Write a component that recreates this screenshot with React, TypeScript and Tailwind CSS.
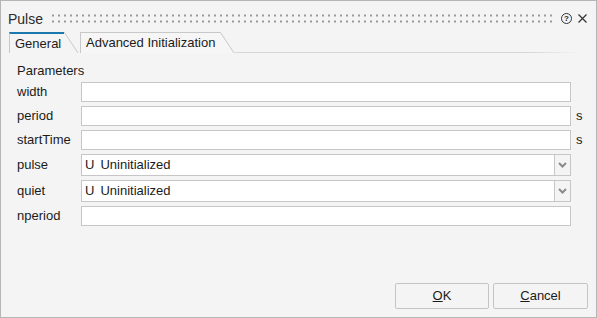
const rows = [
	{ label: "width", kind: "input" },
	{ label: "period", kind: "input", unit: "s" },
	{ label: "startTime", kind: "input", unit: "s" },
	{ label: "pulse", kind: "select", value: "Uninitialized" },
	{ label: "quiet", kind: "select", value: "Uninitialized" },
	{ label: "nperiod", kind: "input" },
];

const Grip = () => (
	<svg className="flex-1 h-[9px] mx-[9px]" preserveAspectRatio="none">
		<defs>
			<pattern id="grip" width="6" height="6" patternUnits="userSpaceOnUse">
				<rect x="0" y="0.5" width="2" height="2" fill="#9a9a9a" />
			</pattern>
		</defs>
		<rect x="0" y="0" width="100%" height="9" fill="url(#grip)" />
	</svg>
);

const TabEdge = ({ fill }: { fill: string }) => (
	<svg width="15" height="21" className="shrink-0">
		<polygon points="0,0 0.5,0 14,21 0,21" fill={fill} />
		<path d="M0 0.5 L0.5 0.5 L14 21" stroke="#c8c8c8" strokeWidth="1" fill="none" />
	</svg>
);

const Chevron = () => (
	<svg width="9" height="6" viewBox="0 0 9 6">
		<path d="M1 1 L4.5 4.5 L8 1" stroke="#8a8a8a" strokeWidth="2" fill="none" />
	</svg>
);

const Field = ({ kind, value }: { kind: string; value?: string }) => {
	if (kind === "select") {
		return (
			<div className="flex h-[22px] border border-[#c6c6c6] bg-white">
				<div className="flex flex-1 items-center pl-[3px]">
					<span>U</span>
					<span className="ml-[6px]">{value}</span>
				</div>
				<div className="flex w-[16px] items-center justify-center border-l border-[#c6c6c6] bg-[#f4f4f4]">
					<Chevron />
				</div>
			</div>
		);
	}
	return <div className="h-[20px] border border-[#c6c6c6] bg-white"></div>;
};

export default function App() {
	return (
		<div className="flex h-[318px] w-[597px] flex-col border border-[#b6b6b6] bg-[#f4f4f4] font-['Liberation_Sans',Arial,sans-serif] text-[13px] leading-[16px] text-[#1b1b1b]">
			{/* Title bar */}
			<div className="flex h-[30px] items-center pl-[7px] pr-[9px] pt-[5px]">
				<span className="text-[14px] text-[#2b2b2b]">Pulse</span>
				<Grip />
				<div className="flex items-center gap-[6px]">
					<span className="flex h-[11px] w-[11px] items-center justify-center rounded-full border border-[#333] text-[8px] font-bold leading-none">
						?
					</span>
					<svg width="9" height="9" viewBox="0 0 9 9">
						<path d="M0.5 0.5 L8.5 8.5 M8.5 0.5 L0.5 8.5" stroke="#333" strokeWidth="1.2" />
					</svg>
				</div>
			</div>

			{/* Tabs */}
			<div className="mt-px flex items-end pl-[8px] pr-[16px]">
				<div className="flex h-[21px]">
					<div className="flex h-[21px] w-[55px] items-center border-l border-t-2 border-l-[#c8c8c8] border-t-[#1b78ad] pl-[5px]">
						General
					</div>
					<TabEdge fill="#f4f4f4" />
				</div>
				<div className="ml-[1px] flex h-[21px]">
					<div className="flex h-[21px] w-[140px] items-center border-l border-t border-[#c8c8c8] bg-[#f6f6f6] pl-[5px]">
						Advanced Initialization
					</div>
					<TabEdge fill="#f6f6f6" />
				</div>
				<div className="h-px flex-1 bg-gradient-to-r from-[#d6d6d6] from-85% to-transparent"></div>
			</div>

			{/* Parameters */}
			<div className="pl-[16px] pt-[10px]">
				<div>Parameters</div>
				<div className="mt-[3px] grid grid-cols-[64px_490px_20px] items-center gap-y-[4px]">
					{rows.map((r) => (
						<div key={r.label} className="contents">
							<span>{r.label}</span>
							<Field kind={r.kind} value={r.value} />
							<span className="pl-[5px]">{r.unit ?? ""}</span>
						</div>
					))}
				</div>
			</div>

			{/* Buttons */}
			<div className="mt-auto flex justify-end gap-[4px] pb-[8px] pr-[8px]">
				<button className="h-[26px] w-[94px] rounded-[2px] border border-[#c4c4c4] bg-[#f4f4f4]">
					<span className="underline">O</span>K
				</button>
				<button className="h-[26px] w-[95px] rounded-[2px] border border-[#c4c4c4] bg-[#f4f4f4]">
					<span className="underline">C</span>ancel
				</button>
			</div>
		</div>
	);
}
